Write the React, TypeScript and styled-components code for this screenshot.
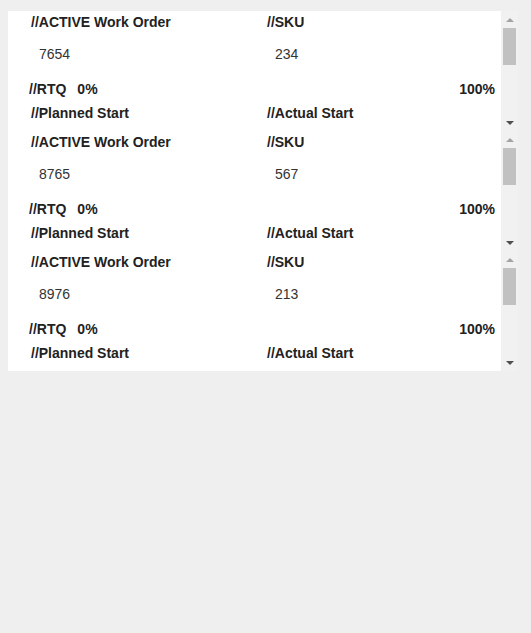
import React from 'react';
import styled, { createGlobalStyle } from 'styled-components';

const GlobalStyle = createGlobalStyle`
  html, body {
    margin: 0;
    padding: 0;
    background: #efefef;
  }
  body {
    padding: 11px 8px 8px 8px;
    font-family: "Liberation Sans", Arial, sans-serif;
    font-size: 14px;
    color: #222;
  }
`;

const List = styled.div`
  width: 510px;
  display: flex;
  flex-direction: column;
`;

const Card = styled.div`
  display: flex;
  height: 120px;
  background: #fff;
`;

const Viewport = styled.div`
  flex: 1;
  overflow: hidden;
  padding: 3px 0 0 23px;
  box-sizing: border-box;
`;

const Grid = styled.div<{ $top?: number }>`
  display: grid;
  grid-template-columns: 236px 1fr;
  margin-top: ${({ $top }) => $top ?? 0}px;
  line-height: 16px;
`;

const Label = styled.div`
  font-weight: bold;
`;

const Value = styled.div`
  padding-left: 8px;
  color: #333;
`;

const RtqRow = styled.div`
  display: flex;
  align-items: center;
  margin: 19px 6px 0 -2px;
  line-height: 16px;
  font-weight: bold;
`;

const RtqPercent = styled.span`
  margin-left: 11px;
`;

const RtqEnd = styled.span`
  margin-left: auto;
`;

const ScrollBar = styled.div`
  width: 17px;
  flex: none;
  display: flex;
  flex-direction: column;
  background: #f1f1f1;
`;

const ArrowButton = styled.div`
  height: 17px;
  display: flex;
  align-items: center;
  justify-content: center;
`;

const Track = styled.div`
  flex: 1;
  display: flex;
  justify-content: center;
`;

const Thumb = styled.div`
  width: 13px;
  height: 37px;
  background: #c1c1c1;
`;

const Arrow: React.FC<{ up?: boolean }> = ({ up }) => (
  <svg width="8" height="4" viewBox="0 0 8 4">
    {up ? (
      <polygon points="0,4 8,4 4,0" fill="#a3a3a3" />
    ) : (
      <polygon points="0,0 8,0 4,4" fill="#505050" />
    )}
  </svg>
);

type Order = {
  workOrder: string;
  sku: string;
};

const orders: Order[] = [
  { workOrder: '7654', sku: '234' },
  { workOrder: '8765', sku: '567' },
  { workOrder: '8976', sku: '213' },
];

const OrderCard: React.FC<{ order: Order }> = ({ order }) => (
  <Card>
    <Viewport>
      <Grid>
        <Label>//ACTIVE Work Order</Label>
        <Label>//SKU</Label>
      </Grid>
      <Grid $top={16}>
        <Value>{order.workOrder}</Value>
        <Value>{order.sku}</Value>
      </Grid>
      <RtqRow>
        <span>//RTQ</span>
        <RtqPercent>0%</RtqPercent>
        <RtqEnd>100%</RtqEnd>
      </RtqRow>
      <Grid $top={8}>
        <Label>//Planned Start</Label>
        <Label>//Actual Start</Label>
      </Grid>
    </Viewport>
    <ScrollBar>
      <ArrowButton>
        <Arrow up />
      </ArrowButton>
      <Track>
        <Thumb />
      </Track>
      <ArrowButton>
        <Arrow />
      </ArrowButton>
    </ScrollBar>
  </Card>
);

const App: React.FC = () => (
  <>
    <GlobalStyle />
    <List>
      {orders.map((o, i) => (
        <OrderCard key={`order-${i}`} order={o} />
      ))}
    </List>
  </>
);

export default App;
